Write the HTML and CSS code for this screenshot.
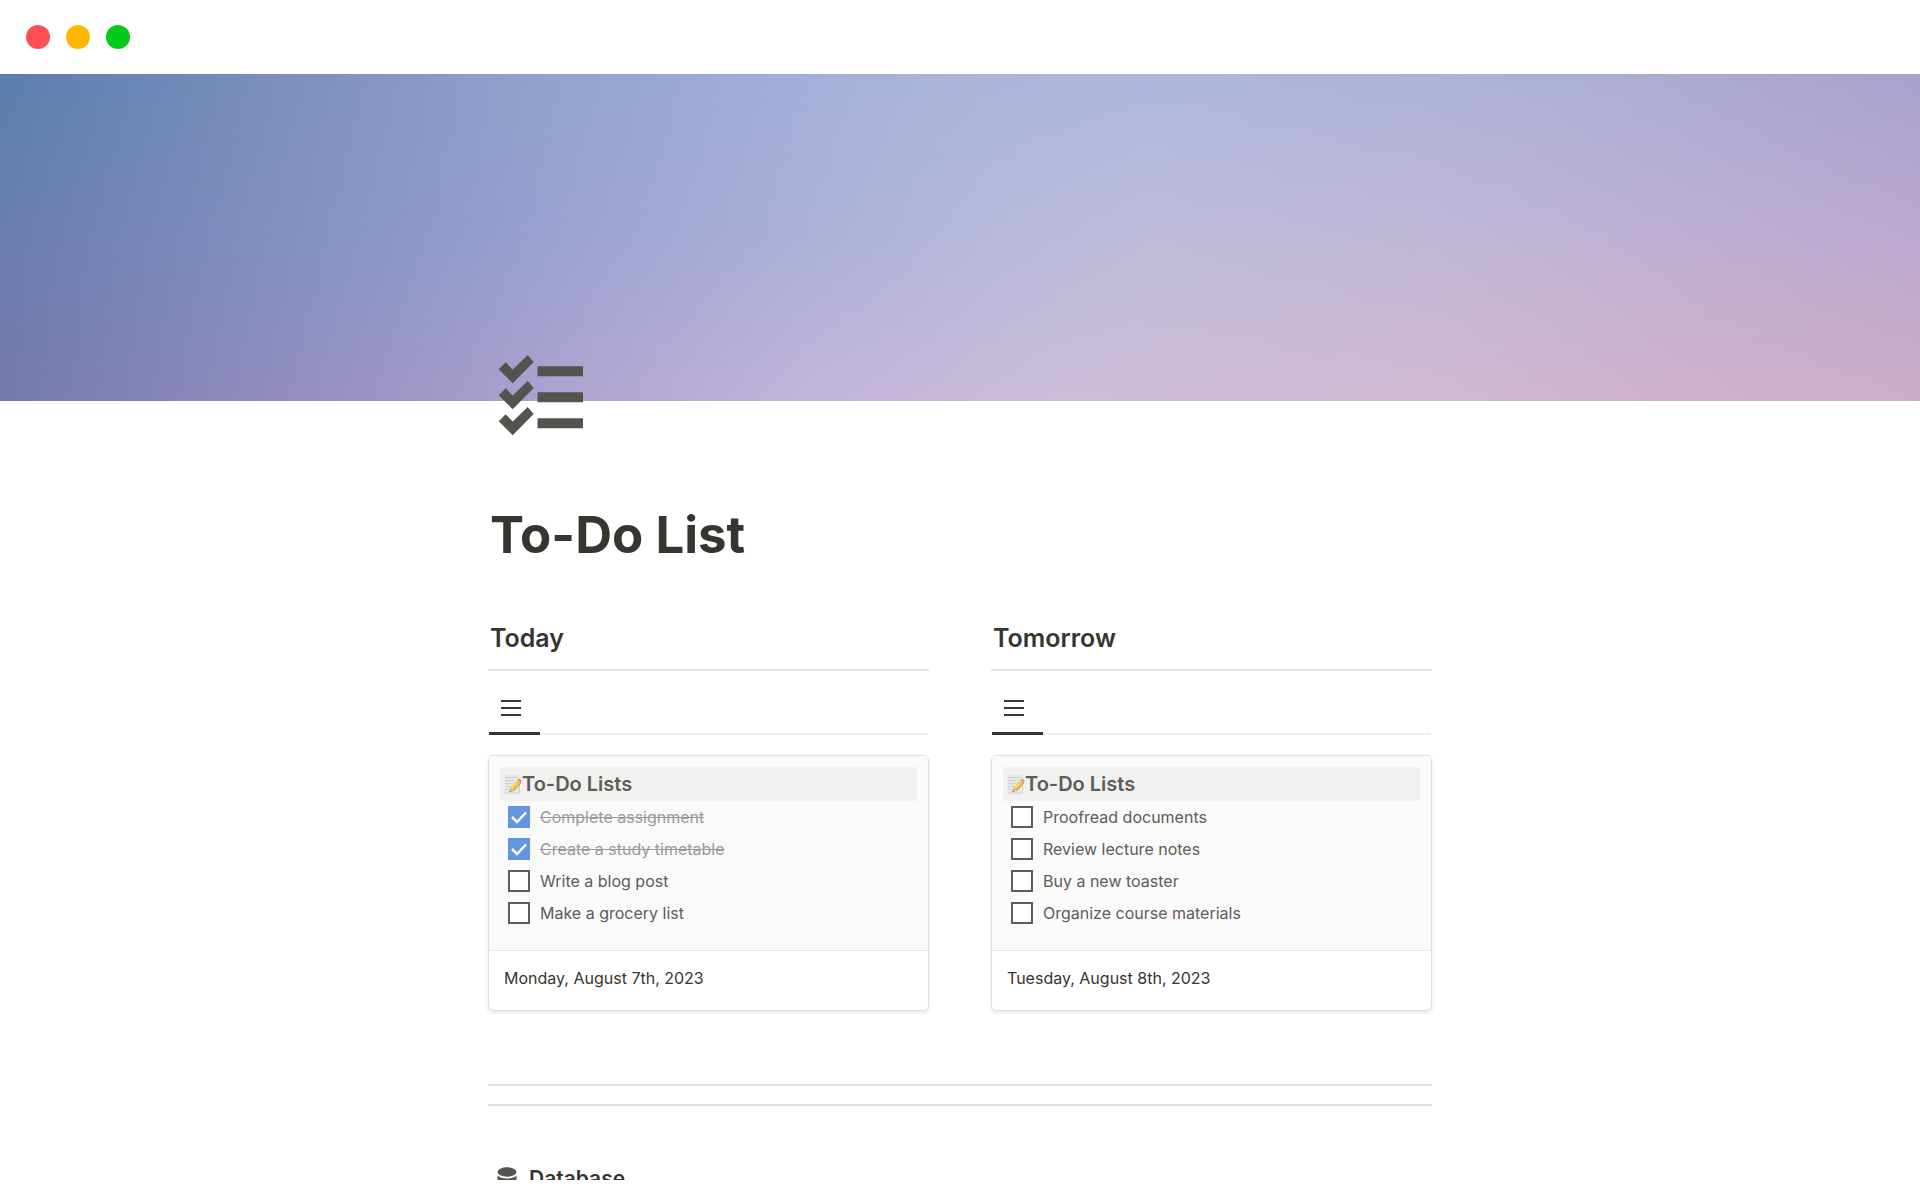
FILE: index.html
```html
<!DOCTYPE html>
<html lang="en">
<head>
<meta charset="utf-8">
<title>To-Do List</title>
<link rel="stylesheet" href="styles.css">
</head>
<body>
<svg class="defs" width="0" height="0" aria-hidden="true">
  <defs>
    <linearGradient id="pencil" x1="0" y1="0" x2="1" y2="1"><stop offset="0" stop-color="#fbe07a"/><stop offset="1" stop-color="#dfa42c"/></linearGradient>
    <symbol id="memo" viewBox="0 0 18 20">
      <path d="M1 1h15v18H1z" fill="#e8e8e6"/>
      <path d="M1 19h15V10" fill="none" stroke="#d0d0cd"/>
      <path d="M2 3.500h13M2 6.500h9M2 9.500h7M2 12.500h5M2 15.500h4" stroke="#c4c4c1" stroke-width="1" stroke-dasharray="2 1"/>
      <path d="M6 18l1-4.500L14 6l3.500 3-7 8z" fill="url(#pencil)"/>
      <path d="M8 14.500l7.500-7.700" stroke="#fff0a8" stroke-width=".7"/>
      <path d="M10.300 16.700l7-7.700" stroke="#b98120" stroke-width=".6"/>
      <path d="M14 6l1-1c1-.8 3.700 1 2.900 2.800l-.6 1.200z" fill="#dc8d8d"/>
      <path d="M6 18l1-4.200 3.100 2.700z" fill="#d9b98b"/>
      <path d="M6 18l.4-1.500 1 .9z" fill="#444"/>
    </symbol>
    <symbol id="list" viewBox="0 0 20 16"><path d="M0 0h20v2H0zM0 7h20v2H0zM0 14h20v2H0z"/></symbol>
  </defs>
</svg>
<div class="window">
  <header class="titlebar">
    <span class="dot red"></span><span class="dot amber"></span><span class="dot green"></span>
  </header>
  <div class="cover"></div>
  <main class="page">
    <svg class="page-icon" viewBox="0 0 86 82" aria-hidden="true">
      <path id="tick" d="M.7 14.300l7-7 7 7.300L29.700 0l6 7L14.700 28.300z"/>
      <use href="#tick" y="26"/><use href="#tick" y="52"/>
      <path d="M39.500 11.300H85v10H39.500zM39.500 37.300H85v10H39.500zM39.500 63.300H85v10H39.500z"/>
    </svg>
    <h1>To-Do List</h1>
    <div class="columns">
      <section class="column">
        <h2>Today</h2>
        <nav class="tabs"><button class="tab" type="button" aria-label="List view"><svg><use href="#list"/></svg></button></nav>
        <article class="card">
          <div class="preview">
            <h3><svg><use href="#memo"/></svg>To-Do Lists</h3>
            <label class="todo"><input type="checkbox" checked><span>Complete assignment</span></label>
            <label class="todo"><input type="checkbox" checked><span>Create a study timetable</span></label>
            <label class="todo"><input type="checkbox"><span>Write a blog post</span></label>
            <label class="todo"><input type="checkbox"><span>Make a grocery list</span></label>
          </div>
          <p class="date">Monday, August 7th, 2023</p>
        </article>
      </section>
      <section class="column">
        <h2>Tomorrow</h2>
        <nav class="tabs"><button class="tab" type="button" aria-label="List view"><svg><use href="#list"/></svg></button></nav>
        <article class="card">
          <div class="preview">
            <h3><svg><use href="#memo"/></svg>To-Do Lists</h3>
            <label class="todo"><input type="checkbox"><span>Proofread documents</span></label>
            <label class="todo"><input type="checkbox"><span>Review lecture notes</span></label>
            <label class="todo"><input type="checkbox"><span>Buy a new toaster</span></label>
            <label class="todo"><input type="checkbox"><span>Organize course materials</span></label>
          </div>
          <p class="date">Tuesday, August 8th, 2023</p>
        </article>
      </section>
    </div>
    <hr><hr>
    <h2 class="database">
      <svg viewBox="0 0 20 24" aria-hidden="true"><ellipse cx="10" cy="5" rx="9.500" ry="4.700"/><path d="M.5 8.500v3.500c0 6 19 6 19 0V8.500c-3 4-16 4-19 0zM.5 15.500V19c0 6 19 6 19 0v-3.500c-3 4-16 4-19 0z"/></svg>
      Database
    </h2>
  </main>
</div>
</body>
</html>
```
FILE: styles.css
```css
* { box-sizing: border-box; margin: 0; padding: 0; }

body {
  height: 100vh;
  padding-bottom: 20px;
  background: #fff;
  color: #37352f;
  font-family: Inter, "Liberation Sans", sans-serif;
  overflow: hidden;
}

.defs { position: absolute; }

.window { height: 100%; overflow: hidden; }

.titlebar {
  display: flex;
  align-items: center;
  gap: 16px;
  height: 74px;
  padding-left: 26px;
}
.dot { width: 24px; height: 24px; border-radius: 50%; }
.red { background: #ff4f52; }
.amber { background: #ffb700; }
.green { background: #00cb18; }

/* Three colour rows blended vertically */
.cover {
  position: relative;
  height: 327px;
  background: linear-gradient(90deg, #6a7db0 0%, #8595c5 17%, #9fa4d3 31%, #acb0d7 42%, #b8b9db 52%, #bfbcdb 60%, #c0b7d8 75%, #bba9cf 100%);
}
.cover::before, .cover::after { content: ""; position: absolute; inset: 0; }
.cover::before {
  background: linear-gradient(90deg, #5a7eac 0%, #8093c0 17%, #8fa2cc 28%, #a1aed9 41%, #a9b4d9 48%, #aeb6dc 60%, #adb0d5 80%, #a8a1cd 100%);
  mask-image: linear-gradient(#000, transparent 50%);
}
.cover::after {
  background: linear-gradient(90deg, #7579ac 0%, #9990c2 17%, #afa4d0 30%, #c2b4da 42%, #cbbddb 55%, #d1b9d4 75%, #d2aecd 88%, #ceabca 100%);
  mask-image: linear-gradient(transparent 50%, #000);
}

.page {
  position: relative;
  width: 944px;
  max-width: 100%;
  margin: -46px auto 0;
}
.page-icon { display: block; width: 86px; height: 82px; margin-left: 10px; fill: #55534e; }

h1 { margin-top: 64px; padding-left: 2px; font-size: 51px; line-height: 68px; font-weight: 700; }

.columns { display: grid; grid-template-columns: 1fr 1fr; gap: 62px; margin-top: 44px; }

h2 { font-size: 25px; line-height: 36px; font-weight: 600; }
.column h2 { padding: 7px 2px 13px; border-bottom: 2px solid #e4e4e3; }

.tabs { display: flex; height: 52px; margin: 12px 1px 0; box-shadow: inset 0 -2px #eeeeed; }
.tab {
  display: flex;
  width: 51px;
  padding: 17px 0 0 12px;
  border: 0;
  border-bottom: 3px solid #37352f;
  background: none;
}
.tab svg { width: 20px; height: 16px; fill: #37352f; }

.card {
  margin-top: 20px;
  border: 1px solid #dfdfde;
  border-radius: 5px;
  box-shadow: 0 2px 4px #0000001a;
  overflow: hidden;
}
.preview { height: 195px; padding: 11px; border-bottom: 1px solid #e6e6e5; background: #fafafa; color: #5e5c57; }
h3 {
  display: flex;
  align-items: center;
  height: 34px;
  padding-left: 3px;
  background: #f1f1ef;
  font-size: 20px;
  line-height: 34px;
  font-weight: 600;
}
h3 svg { width: 19px; height: 20px; }

.todo { display: flex; align-items: center; gap: 10px; height: 32px; padding-left: 8px; font-size: 16px; }
.todo input { appearance: none; width: 22px; height: 22px; border: 2px solid #5e5c57; background: #fff; }
.todo input:checked {
  border: 0;
  background: #6196e0 url("data:image/svg+xml,%3Csvg xmlns='http://www.w3.org/2000/svg' viewBox='0 0 22 22'%3E%3Cpath d='M4 11l5 5 9-9.500' fill='none' stroke='white' stroke-width='2.500'/%3E%3C/svg%3E");
}
.todo input:checked + span { color: #9b9a97; text-decoration: line-through; text-decoration-thickness: 1px; }

.date { height: 59px; padding: 15px; font-size: 16px; line-height: 24px; }

hr { height: 2px; border: 0; background: #e0e0df; }
.columns + hr { margin: 73px 0 18px; }

.database { display: flex; align-items: center; gap: 12px; margin-top: 55px; padding-left: 9px; font-size: 21px; }
.database svg { width: 20px; height: 24px; fill: #55534e; }
```
